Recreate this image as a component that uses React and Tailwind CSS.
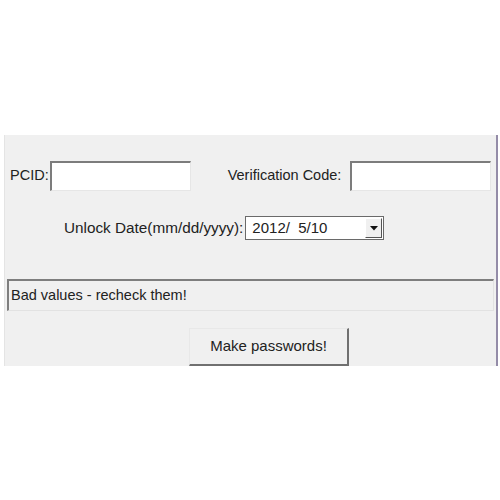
export default function App() {
  const font = { fontFamily: '"Liberation Sans", Arial, sans-serif' };
  return (
    <div className="w-[500px] h-[500px] bg-white pt-[135px] pl-[4px]" style={font}>
      <div className="w-[494px] h-[231px] bg-[#f0f0f0] border-l border-l-[#e4e4e4] border-r-[2px] border-r-[#948ca8] text-[14.5px] text-[#222]">
        {/* ID row */}
        <div className="flex items-center pt-[26px] pl-[5px]">
          <span>PCID:</span>
          <div className="ml-[1px] w-[141px] h-[30px] bg-white border-t-[2px] border-l-[2px] border-t-[#7c7c7c] border-l-[#7c7c7c] border-b border-r border-b-[#e6e6e6] border-r-[#e6e6e6]" />
          <span className="ml-[37px]">Verification Code:</span>
          <div className="ml-[9px] w-[141px] h-[30px] bg-white border-t-[2px] border-l-[2px] border-t-[#7c7c7c] border-l-[#7c7c7c] border-b border-r border-b-[#e6e6e6] border-r-[#e6e6e6]" />
        </div>

        {/* date row */}
        <div className="flex items-center mt-[25px] pl-[59px]">
          <span className="text-[15.3px]">Unlock Date(mm/dd/yyyy):</span>
          <div className="ml-[2px] w-[139px] h-[24px] bg-white border border-[#6a6a6a] flex items-center">
            <span className="flex-1 pl-[6px] text-[15px]">2012/&nbsp; 5/10</span>
            <div className="w-[17px] h-[20px] mr-[1px] bg-[#f0f0f0] border border-t-white border-l-white border-r-[#555] border-b-[#555] flex items-center justify-center">
              <svg width="8" height="5" viewBox="0 0 8 5">
                <path d="M0 0H8L4 4.5Z" fill="#111" />
              </svg>
            </div>
          </div>
        </div>

        {/* status */}
        <div className="mt-[39px] ml-[2px] w-[487px] h-[32px] border-t-[2px] border-l-[2px] border-t-[#7e7e7e] border-l-[#7e7e7e] border-b border-r border-b-[#e2e2e2] border-r-[#e2e2e2] pl-[2px] pt-[4px]">
          Bad values - recheck them!
        </div>

        {/* action */}
        <div className="flex mt-[17px] pl-[184px]">
          <button className="w-[160px] h-[38px] bg-[#f0f0f0] border border-t-[#e8e8e8] border-l-[#e8e8e8] border-r-[2px] border-b-[2px] border-r-[#707070] border-b-[#707070] text-[15px] text-[#222]">
            Make passwords!
          </button>
        </div>
      </div>
    </div>
  );
}
